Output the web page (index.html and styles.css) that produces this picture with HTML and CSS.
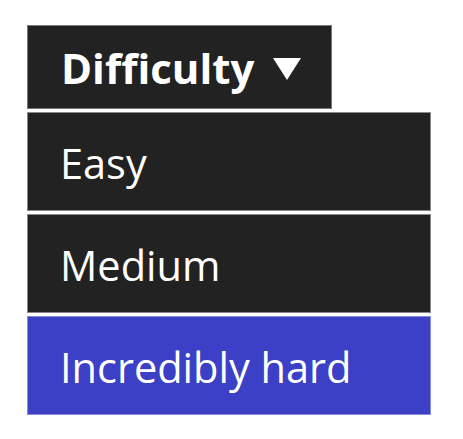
FILE: index.html
```html
<!DOCTYPE html>
<html>
<head>
<meta charset="utf-8">
<link rel="stylesheet" href="styles.css">
</head>
<body>
<div class="dropdown">
  <div class="toggle"><span>Difficulty</span><svg class="caret" width="28" height="22" viewBox="0 0 28 22"><polygon points="0,0 28,0 14,22" fill="#fff"/></svg></div>
  <ul class="menu">
    <li class="item">Easy</li>
    <li class="item">Medium</li>
    <li class="item active">Incredibly hard</li>
  </ul>
</div>
</body>
</html>
```

FILE: styles.css
```css
html, body {
  margin: 0;
  padding: 0;
  background: #fff;
}
body {
  padding: 25px 0 0 27px;
  font-family: "Open Sans", "Noto Sans", sans-serif;
}
.dropdown {
  display: flex;
  flex-direction: column;
  align-items: flex-start;
}
.toggle {
  box-sizing: border-box;
  width: 305px;
  height: 84px;
  background: #222;
  border: 1px solid #777;
  color: #fff;
  font-weight: 700;
  font-size: 42px;
  display: flex;
  align-items: center;
  padding-left: 33px;
  gap: 19px;
}
.caret {
  display: block;
  margin-top: 4px;
}
.menu {
  list-style: none;
  margin: 3px 0 0;
  padding: 0;
  display: flex;
  flex-direction: column;
  gap: 3px;
}
.item {
  box-sizing: border-box;
  width: 404px;
  height: 99px;
  background: #222;
  border: 1px solid #888;
  color: #fff;
  font-size: 41.5px;
  display: flex;
  align-items: center;
  padding-left: 32px;
  padding-top: 3px;
}
.item.active {
  background: #3c40c6;
  border-color: #8a8cd8;
}
```
